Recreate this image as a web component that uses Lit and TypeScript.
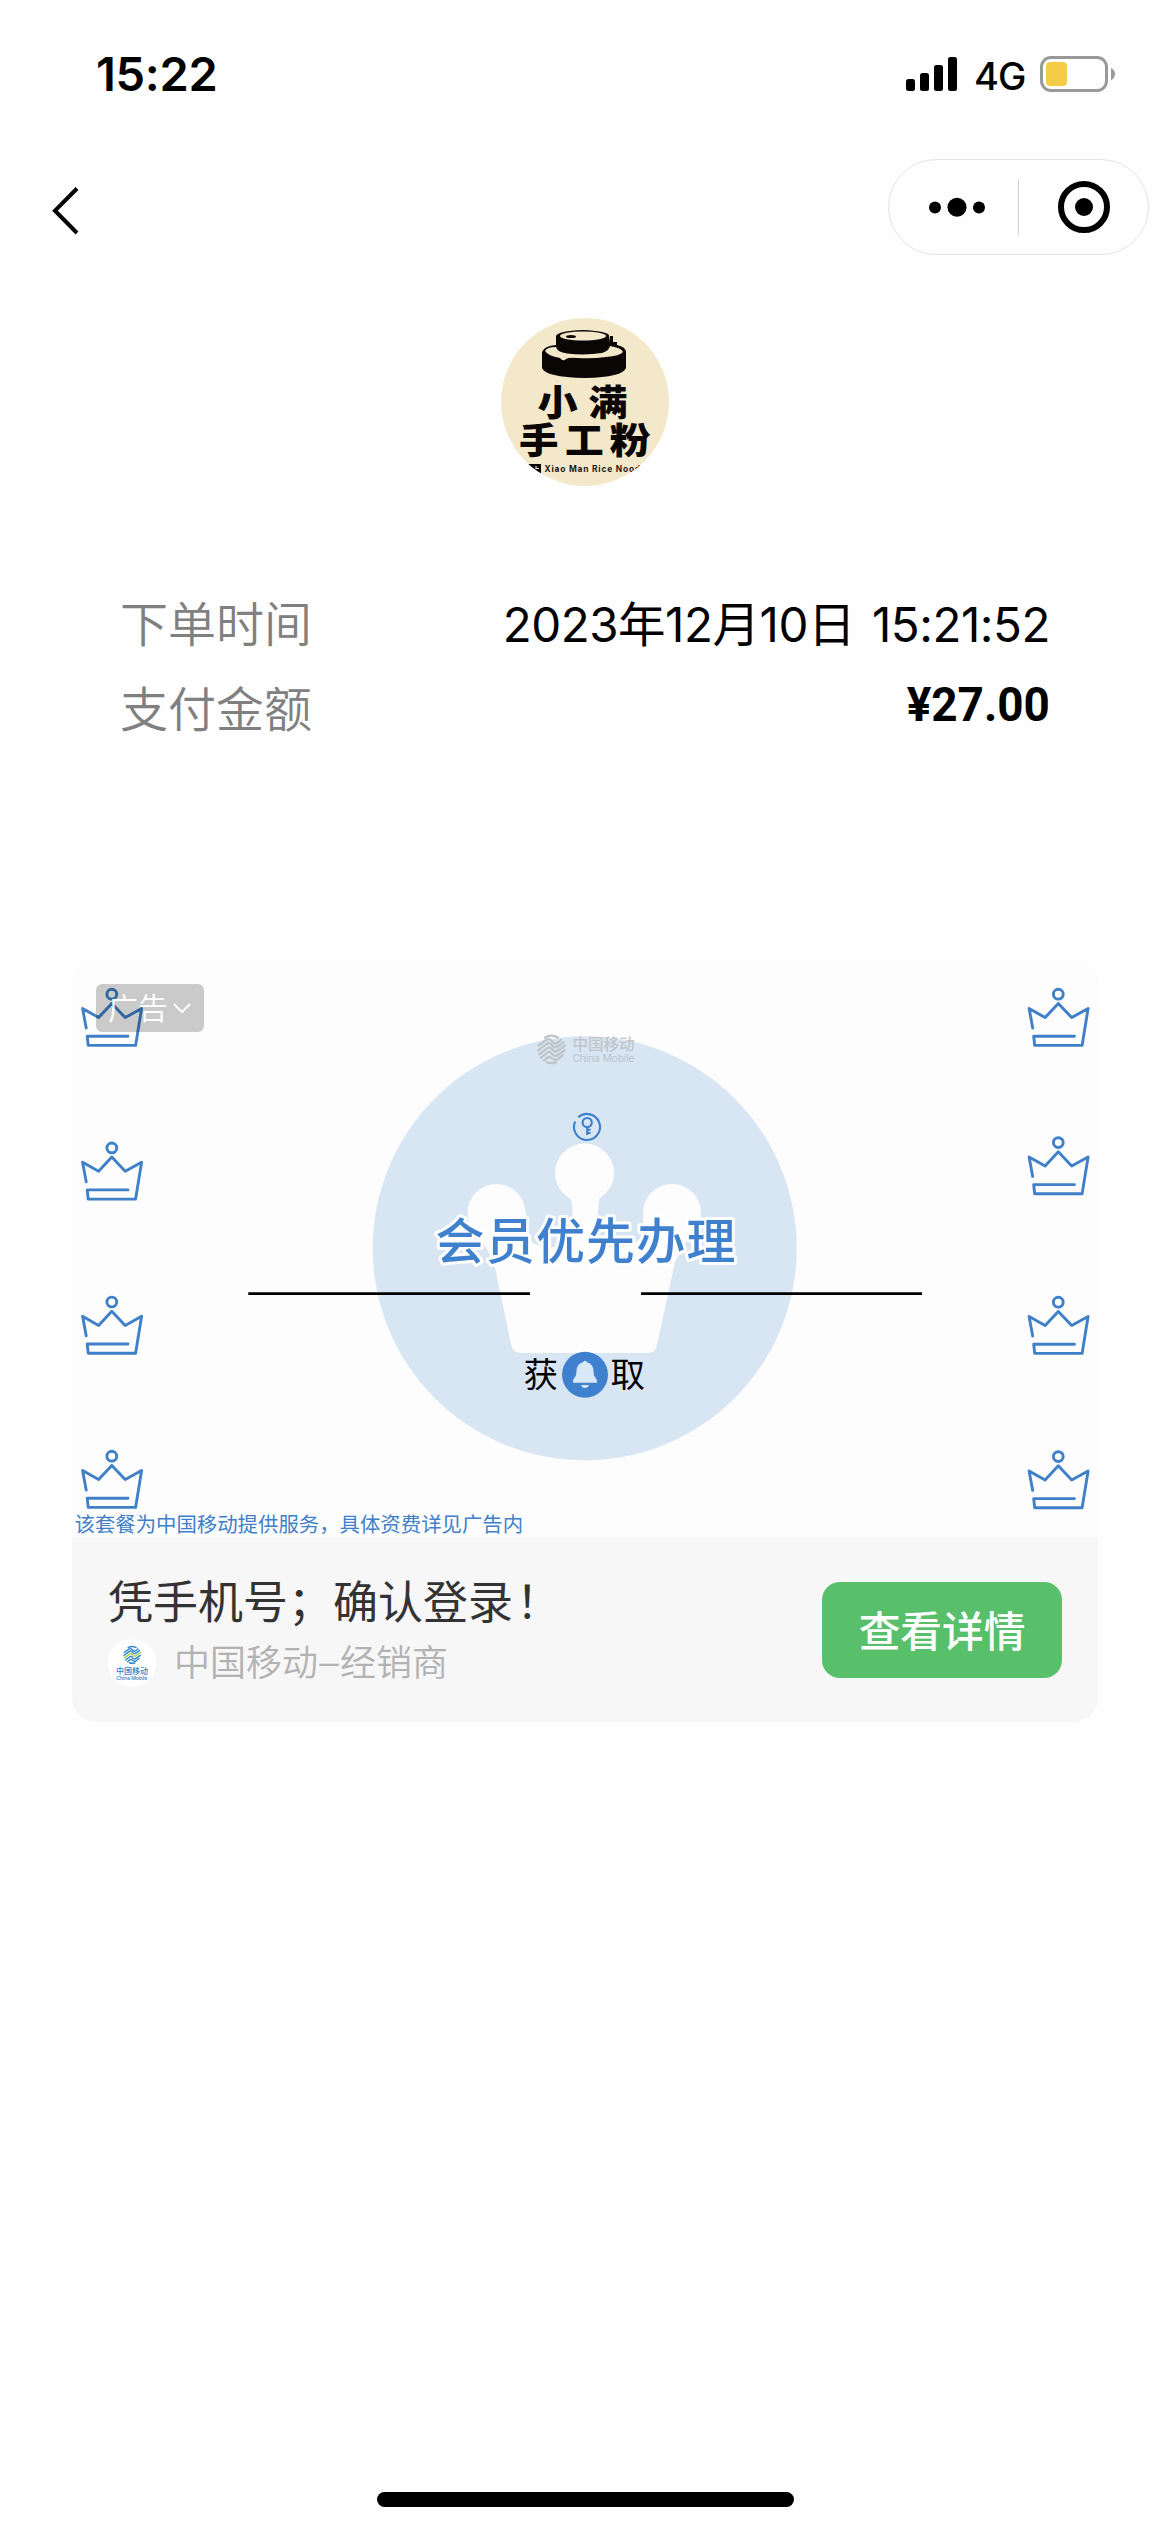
import { LitElement, html, css, svg } from "lit";
import { customElement } from "lit/decorators.js";

const crown = (x: number, y: number) => svg`
  <g transform="translate(${x} ${y})" fill="none" stroke="#3f80c8" stroke-width="2.9" stroke-linejoin="round" stroke-linecap="round">
    <circle cx="30.8" cy="6.2" r="4.900"/>
    <path d="M5.2 40 L1.6 20.5 L17.6 29.6 L30.8 15.4 L44.2 29.6 L60.6 20.5 L54.6 57.4 H7.2 L6.2 48.2 H47"/>
  </g>`;

const wavesMark = (a: string, b: string) => svg`
  <g fill="none" stroke-width="2.300" stroke-linejoin="round" stroke-linecap="round">
    <path stroke="${a}" d="M8.500 3.600 Q15 -.2 21.500 3.400"/>
    <path stroke="${a}" d="M2 11.500 L9.500 6 Q12.500 4 15 6.500 L16.500 8.300 Q18.500 10.500 21 8.500 L24.500 5.800"/>
    <path stroke="${a}" d="M1.500 16.300 L10 10 Q12.800 8 15 10.500 L16.300 12 Q18.500 14.300 21 12.500 L27 8.300"/>
    <path stroke="${b}" d="M2.500 20.300 L10.500 14.300 Q13 12.500 15 14.800 L16.300 16.300 Q18.500 18.500 21 16.800 L28.500 11.500"/>
    <path stroke="${a}" d="M4.300 23.800 L10.500 18.800 Q13 17 15 19.300 L16.300 20.800 Q18.500 23 21 21.200 L28.300 16.200"/>
    <path stroke="${a}" d="M7.500 26.600 L10.500 23.800 Q13 22 15.300 24 Q18.500 27.500 21.500 25 L26.500 21.200"/>
    <path stroke="${a}" d="M10.500 28.300 Q15 30 19.500 28.400"/>
  </g>`;

@customElement("app-root")
export class AppRoot extends LitElement {
  static styles = css`
    :host {
      display: block;
      font-family: Inter, "Noto Sans CJK SC", sans-serif;
      color: #000;
    }
    * { box-sizing: border-box; }
    svg { display: block; }
    .page {
      width: 1170px;
      height: 2532px;
      background: #fefefe;
      display: flex;
      flex-direction: column;
      overflow: hidden;
    }
    .status {
      height: 148px;
      padding: 0 54px 0 96px;
      display: flex;
      justify-content: space-between;
      align-items: center;
    }
    .clock {
      font-size: 47px;
      font-weight: 600;
      line-height: 60px;
      letter-spacing: -0.3px;
    }
    .indicators { display: flex; align-items: center; }
    .network {
      font-size: 38px;
      font-weight: 500;
      line-height: 48px;
      margin: 3px 0 0 16px;
      width: 66px;
      letter-spacing: -1px;
    }
    .nav {
      height: 122px;
      padding: 11px 21px 0 50px;
      display: flex;
      justify-content: space-between;
      align-items: flex-start;
    }
    .back { margin-top: 26px; }
    .capsule {
      width: 261px;
      height: 96px;
      border: 1px solid #e4e4e4;
      border-radius: 48px;
    }
    .brand {
      align-self: center;
      margin-top: 48px;
      width: 168px;
      height: 168px;
    }
    .order {
      margin-top: 97px;
      padding: 0 120px;
      display: flex;
      flex-direction: column;
    }
    .row { display: flex; justify-content: space-between; height: 85px; }
    .label { color: #808080; font-size: 48px; line-height: 84px; font-weight: 350; }
    .date {
      font-size: 47.5px;
      line-height: 84px;
      font-weight: 400;
      white-space: pre;
      letter-spacing: -0.45px;
      word-spacing: 4px;
    }
    .amount {
      font-family: Roboto, sans-serif;
      font-size: 49px;
      font-weight: 700;
      line-height: 74px;
      transform: scaleX(0.937);
      transform-origin: right center;
    }
    .card {
      margin: 207px 72px 0;
      height: 762px;
      border-radius: 24px;
      overflow: hidden;
      display: flex;
      flex-direction: column;
      background: #f7f7f7;
    }
    .media { position: relative; height: 577px; background: #fdfdfd; }
    .tag {
      position: absolute;
      left: 24px;
      top: 24px;
      width: 108px;
      height: 48px;
      padding: 0 13px 0 12px;
      border-radius: 6px;
      background: rgba(0, 0, 0, 0.2);
      color: #fff;
      font-size: 30px;
      font-weight: 350;
      line-height: 44px;
      display: flex;
      justify-content: space-between;
      align-items: center;
    }
    .footer {
      flex: 1;
      padding: 0 36px;
      display: flex;
      justify-content: space-between;
    }
    .copy { padding-top: 32px; }
    .headline { font-size: 45px; line-height: 68px; color: #333; }
    .bang { margin-left: 3px; }
    .advertiser { display: flex; align-items: center; height: 52px; gap: 18px; }
    .advertiser-name { color: #b2b2b2; font-size: 36px; line-height: 54px; font-weight: 350; }
    .dash { display: inline-block; transform: scaleX(1.08); margin: 0 2px; }
    .cta {
      margin-top: 45px;
      width: 240px;
      height: 96px;
      border: 0;
      border-radius: 18px;
      background: #58bf6b;
      color: #fff;
      font: 500 41.7px/88px "Noto Sans CJK SC", sans-serif;
      padding: 0 0 3px;
      text-align: center;
    }
    .home {
      margin: auto auto 25px;
      width: 417px;
      height: 15px;
      border-radius: 8px;
      background: #000;
    }
  `;

  private artwork() {
    return svg`
      <svg width="1026" height="577" viewBox="72 960 1026 577" font-family="'Noto Sans CJK SC', sans-serif">
        <circle cx="584.700" cy="1248.300" r="212" fill="#d8e6f4"/>
        <g fill="#fdfdfd">
          <circle cx="584.500" cy="1173" r="29.500"/>
          <path d="M569 1194 Q572.500 1200 572.500 1216 V1250 H598 V1216 Q598 1200 601 1194 Z"/>
          <circle cx="496.500" cy="1213" r="29"/>
          <circle cx="672" cy="1213" r="29"/>
          <path d="M468 1213 Q469 1225 480 1237 L494 1262 L511 1344 Q513 1353 521 1353 H648 Q655 1353 657 1345 L675 1262 L689 1237 Q700 1225 701 1213 L643 1213 Q643 1228 645 1232 Q636 1247 620 1247 H549 Q532 1247 523 1232 Q526 1224 526 1213 Z"/>
        </g>
        <g transform="translate(536.500 1034)">${wavesMark("#bfc4ca", "#bfc4ca")}</g>
        <text x="572.500" y="1049.600" font-size="15.600" font-weight="500" fill="#c0c5ca" textLength="62">中国移动</text>
        <text x="572.500" y="1061.800" font-size="10.300" font-family="Inter, sans-serif" fill="#bdc3ca" textLength="62">China Mobile</text>
        <g fill="none" stroke="#3b7fcf" stroke-width="2.100">
          <path d="M578.300 1117.300 A13 13 0 1 1 575.200 1121.500"/>
          <circle cx="587.200" cy="1122.600" r="4.600"/>
          <path d="M587.200 1127 V1135 M587.200 1129.800 H590.600 M587.200 1133 H590.600"/>
        </g>
        ${[988, 1141.7, 1295.8, 1450].map((y) => crown(81, y))}
        ${[988, 1136.4, 1296, 1450.4].map((y) => crown(1027.5, y))}
        <text x="435.500" y="1259" font-size="49" font-weight="500" fill="#3f81cf" stroke="#fff" stroke-width="6" stroke-linejoin="round" paint-order="stroke" textLength="300">会员优先办理</text>
        <path d="M248.300 1293.600 H530 M641 1293.600 H922" stroke="#000" stroke-width="2.600"/>
        <text x="523.500" y="1387.200" font-size="34.500" fill="#000">获</text>
        <text x="610.500" y="1387.200" font-size="34.500" fill="#000">取</text>
        <circle cx="585" cy="1374.700" r="23" fill="#3f80cf"/>
        <g fill="#d9e8f7">
          <path d="M573 1382.700 Q572.500 1379.500 575 1377 Q576.500 1375 576.500 1371 Q576.700 1364 582.500 1362.500 Q585 1359 587.500 1362.500 Q593.300 1364 593.500 1371 Q593.500 1375 595 1377 Q597.500 1379.500 597 1382.700 Z"/>
          <path d="M581 1385 H589 Q588 1388 585 1388 Q582 1388 581 1385 Z"/>
        </g>
        <text x="74.500" y="1532" font-size="20.400" font-weight="400" fill="#3f80c8">该套餐为中国移动提供服务，具体资费详见广告内</text>
      </svg>`;
  }

  private brandLogo() {
    return html`
      <svg class="brand" viewBox="0 0 168 168" font-family="'Noto Sans CJK SC', sans-serif">
        <defs><clipPath id="disc"><circle cx="84" cy="84" r="84"/></clipPath></defs>
        <g clip-path="url(#disc)">
          <rect width="168" height="168" fill="#f3e9ca"/>
          <path fill="#0a0606" d="M41 34 Q43 28 55 27 V18 Q57 13 82 12 Q105 13 108 17 V24 L109 18 H112 V24 H116 V27 Q125 29 125 34 V50 Q122 59 84 60 Q44 59 41 50 Z"/>
          <ellipse cx="82" cy="18" rx="23" ry="4.500" fill="#f3e9ca"/>
          <ellipse cx="70" cy="18.500" rx="5" ry="1.600" fill="#0a0606"/>
          <path fill="#f3e9ca" d="M44 33 Q46 29 55 29 Q56 34 66 35.500 Q84 37.500 101 35 Q108 33 109 28 Q121 30 122 34 Q119 38 105 39 Q90 41 77 40 Q68 39 65 41 Q62 44 59 40 Q47 38 44 33 Z"/>
          <g fill="#0a0606" font-weight="900" font-size="36.500">
            <text transform="translate(36.500 98) scale(1.1 1)">小</text>
            <text transform="translate(87.500 98) scale(1.07 1)">满</text>
            <text transform="translate(18 135.500) scale(1.080 1)">手</text>
            <text transform="translate(64 135.500) scale(1.060 1)">工</text>
            <text transform="translate(108.500 135.500) scale(1.130 1)">粉</text>
            <rect x="26" y="146" width="14" height="9"/>
            <path d="M30 149 l3 4 M35 148 v2.500 h3" stroke="#f3e9ca" stroke-width="1.200" fill="none"/>
          </g>
          <text x="43.500" y="154" font-family="Inter, sans-serif" font-size="8.400" font-weight="700" fill="#1c1512" textLength="110">Xiao Man Rice Noodles</text>
        </g>
      </svg>`;
  }

  render() {
    return html`
      <main class="page">
        <header class="status">
          <span class="clock">15:22</span>
          <div class="indicators">
            <svg width="52" height="36" viewBox="0 0 52 36">
              <rect x="0" y="23" width="9" height="12" rx="2.500"/>
              <rect x="14" y="17" width="9" height="18" rx="2.500"/>
              <rect x="28" y="9" width="9" height="26" rx="2.500"/>
              <rect x="42" y="1" width="9" height="34" rx="2.500"/>
            </svg>
            <span class="network">4G</span>
            <svg width="76" height="36" viewBox="0 0 76 36">
              <rect x="1.500" y="1.500" width="65" height="33" rx="9.500" fill="none" stroke="#999" stroke-width="3"/>
              <rect x="6" y="6" width="21" height="24" rx="4" fill="#f5cc46"/>
              <path d="M71 12 Q75 14 75 18 Q75 22 71 24 Z" fill="#999"/>
            </svg>
          </div>
        </header>
        <nav class="nav">
          <svg class="back" width="32" height="52" viewBox="0 0 32 52">
            <path d="M27 3.500 L5 25.700 L27 48" fill="none" stroke="#000" stroke-width="4"/>
          </svg>
          <div class="capsule">
            <svg width="259" height="94" viewBox="0 0 259 94">
              <circle cx="46" cy="47.500" r="6"/>
              <circle cx="68" cy="47.200" r="9.500"/>
              <circle cx="90" cy="47.500" r="6"/>
              <path d="M129.500 19 V75" stroke="#d0d0d0" stroke-width="1"/>
              <circle cx="195" cy="47" r="23" fill="none" stroke="#000" stroke-width="6"/>
              <circle cx="195" cy="47" r="9"/>
            </svg>
          </div>
        </nav>
        ${this.brandLogo()}
        <section class="order">
          <div class="row">
            <span class="label">下单时间</span>
            <span class="date">2023年12月10日 15:21:52</span>
          </div>
          <div class="row">
            <span class="label">支付金额</span>
            <span class="amount">¥27.00</span>
          </div>
        </section>
        <article class="card">
          <div class="media">
            ${this.artwork()}
            <div class="tag">
              <span>广告</span>
              <svg width="18" height="12" viewBox="0 0 18 12">
                <path d="M1 2 L9 10 L17 2" fill="none" stroke="#fff" stroke-width="2"/>
              </svg>
            </div>
          </div>
          <div class="footer">
            <div class="copy">
              <div class="headline">凭手机号；确认登录<span class="bang">！</span></div>
              <div class="advertiser">
                <svg width="48" height="48" viewBox="0 0 48 48" font-family="'Noto Sans CJK SC', sans-serif">
                  <circle cx="24" cy="24" r="24" fill="#fff"/>
                  <g transform="translate(15 6.500) scale(.61)">${wavesMark("#2f86cf", "#a3cf3c")}</g>
                  <text x="8" y="34.500" font-size="8" font-weight="500" fill="#2f7fc6" textLength="32">中国移动</text>
                  <text x="8.300" y="41" font-family="Inter, sans-serif" font-size="5.200" font-weight="500" fill="#2f7fc6" textLength="31">China Mobile</text>
                </svg>
                <span class="advertiser-name">中国移动<span class="dash">–</span>经销商</span>
              </div>
            </div>
            <button class="cta">查看详情</button>
          </div>
        </article>
        <div class="home"></div>
      </main>`;
  }
}
